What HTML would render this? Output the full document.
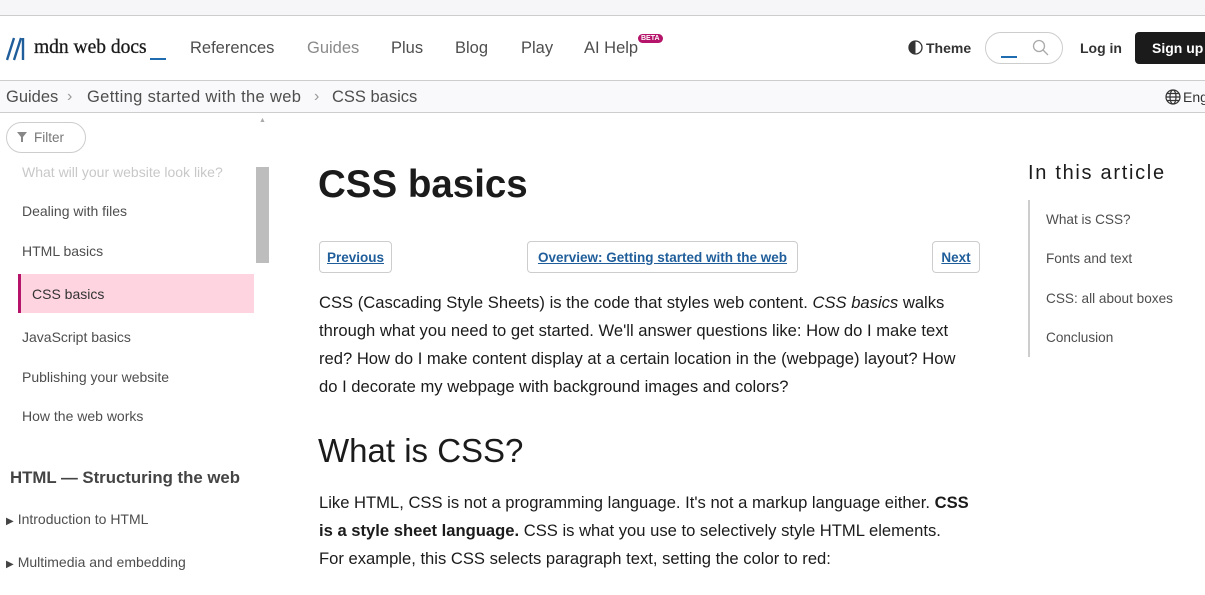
<!DOCTYPE html>
<html><head><meta charset="utf-8"><style>
*{margin:0;padding:0;box-sizing:border-box}
body{width:1205px;height:595px;overflow:hidden;background:#fff;font-family:"Liberation Sans",sans-serif;color:#1b1b1b;position:relative}
.a{position:absolute;white-space:nowrap}
.nav{font-size:16px;color:#4e4e4e}
.side{font-size:14px;color:#4e4e4e}
.toc{font-size:13.6px;color:#4e4e4e}
.p{font-size:16.6px;line-height:28px;color:#1b1b1b;width:652px;white-space:normal}
.btn{border:1px solid #cdcdcd;border-radius:4px;height:32px;font-size:13.5px;font-weight:bold;color:#1f5e9a;text-decoration:underline;display:flex;align-items:center;justify-content:center}
.tri{font-size:10px;color:#444;margin-right:4px}
</style></head><body>
<div class="a" style="left:0;top:0;width:1205px;height:16px;background:#f6f6f8;border-bottom:1px solid #cdcdcd"></div>
<svg class="a" style="left:6px;top:37px" width="26" height="24" viewBox="0 0 26 24"><path d="M1 23L8 1M8 23L15 1M17 1V23" stroke="#1f5e9a" stroke-width="2.4" fill="none"/></svg>
<div class="a" style="left:34px;top:37px;font-family:'Liberation Serif',serif;font-size:19.5px;color:#1b1b1b;-webkit-text-stroke:0.3px #1b1b1b">mdn web docs</div>
<div class="a" style="left:150px;top:58px;width:16px;height:2px;background:#1f6db0"></div>
<div class="a nav" style="left:190px;top:39px;font-size:16.5px">References</div>
<div class="a nav" style="left:307px;top:39px;color:#8a8a8a;font-size:16.5px">Guides</div>
<div class="a nav" style="left:391px;top:39px;font-size:16.5px">Plus</div>
<div class="a nav" style="left:455px;top:39px;font-size:16.5px">Blog</div>
<div class="a nav" style="left:521px;top:39px;font-size:16.5px">Play</div>
<div class="a nav" style="left:584px;top:39px;font-size:16.5px">AI Help</div>
<div class="a" style="left:638px;top:34px;background:#b5146a;color:#fff;font-size:7px;font-weight:bold;border-radius:6px;padding:1px 3px">BETA</div>
<svg class="a" style="left:908px;top:40px" width="15" height="15"><circle cx="7.5" cy="7.5" r="6.5" fill="none" stroke="#333" stroke-width="1.3"/><path d="M7.5 1a6.5 6.5 0 0 0 0 13z" fill="#333"/></svg>
<div class="a" style="left:926px;top:40px;font-size:14px;font-weight:bold;color:#333">Theme</div>
<div class="a" style="left:985px;top:32px;width:78px;height:32px;border:1px solid #cdcdcd;border-radius:16px"></div>
<div class="a" style="left:1001px;top:56px;width:16px;height:2px;background:#1f6db0"></div>
<svg class="a" style="left:1032px;top:39px" width="17" height="17"><circle cx="7" cy="7" r="5.5" fill="none" stroke="#aaa" stroke-width="1.3"/><path d="M11 11L16 16" stroke="#aaa" stroke-width="1.3"/></svg>
<div class="a" style="left:1080px;top:40px;font-size:14px;font-weight:bold;color:#333">Log in</div>
<div class="a" style="left:1135px;top:32px;width:80px;height:32px;background:#1b1b1b;border-radius:4px;color:#fff;font-size:14px;font-weight:bold;padding:8px 0 0 17px">Sign up</div>
<div class="a" style="left:0;top:80px;width:1205px;height:33px;background:#f9f9fb;border-top:1px solid #cdcdcd;border-bottom:1px solid #cdcdcd"></div>
<div class="a nav" style="left:6px;top:88px;font-size:16.5px">Guides</div>
<div class="a nav" style="left:67px;top:88px;color:#999">›</div>
<div class="a nav" style="left:87px;top:88px;font-size:16.5px;letter-spacing:0.35px">Getting started with the web</div>
<div class="a nav" style="left:314px;top:88px;color:#999">›</div>
<div class="a nav" style="left:332px;top:88px;font-size:16.5px">CSS basics</div>
<svg class="a" style="left:1165px;top:89px" width="16" height="16" viewBox="0 0 16 16" fill="none" stroke="#333" stroke-width="1.2"><circle cx="8" cy="8" r="7"/><ellipse cx="8" cy="8" rx="3" ry="7"/><path d="M1 8H15M2 4.5H14M2 11.5H14"/></svg>
<div class="a" style="left:1183px;top:89px;font-size:14px;color:#333">Eng</div>
<div class="a" style="left:259px;top:117px;font-size:7px;color:#aaa">▲</div>
<div class="a" style="left:6px;top:122px;width:80px;height:31px;border:1px solid #cdcdcd;border-radius:16px"></div>
<svg class="a" style="left:17px;top:132px" width="10" height="10"><path d="M0 0H10L6 5V10H4V5Z" fill="#888"/></svg>
<div class="a" style="left:34px;top:130px;font-size:13.5px;color:#777">Filter</div>
<div class="a side" style="left:22px;top:164px;color:#c8c8c8">What will your website look like?</div>
<div class="a" style="left:256px;top:167px;width:13px;height:96px;background:#bdbdbd"></div>
<div class="a side" style="left:22px;top:203px">Dealing with files</div>
<div class="a side" style="left:22px;top:243px">HTML basics</div>
<div class="a" style="left:18px;top:274px;width:236px;height:39px;background:#fdd4e0;border-left:3px solid #b5146a"></div>
<div class="a side" style="left:32px;top:286px;color:#333">CSS basics</div>
<div class="a side" style="left:22px;top:329px">JavaScript basics</div>
<div class="a side" style="left:22px;top:369px">Publishing your website</div>
<div class="a side" style="left:22px;top:408px">How the web works</div>
<div class="a" style="left:10px;top:468px;font-size:16.8px;font-weight:bold;color:#444">HTML — Structuring the web</div>
<div class="a side" style="left:6px;top:511px"><span class="tri">▶</span>Introduction to HTML</div>
<div class="a side" style="left:6px;top:554px"><span class="tri">▶</span>Multimedia and embedding</div>
<div class="a" style="left:318px;top:163px;font-size:38.5px;font-weight:bold;color:#1b1b1b">CSS basics</div>
<div class="a btn" style="left:319px;top:241px;width:73px">Previous</div>
<div class="a btn" style="left:527px;top:241px;width:271px">Overview: Getting started with the web</div>
<div class="a btn" style="left:932px;top:241px;width:48px">Next</div>
<div class="a p" style="left:319px;top:289px">CSS (Cascading Style Sheets) is the code that styles web content. <i>CSS basics</i> walks through what you need to get started. We'll answer questions like: How do I make text red? How do I make content display at a certain location in the (webpage) layout? How do I decorate my webpage with background images and colors?</div>
<div class="a" style="left:318px;top:432px;font-size:33px;color:#1b1b1b">What is CSS?</div>
<div class="a p" style="left:319px;top:489px">Like HTML, CSS is not a programming language. It's not a markup language either. <b>CSS is a style sheet language.</b> CSS is what you use to selectively style HTML elements. For&nbsp;example, this CSS selects paragraph text, setting the color to red:</div>
<div class="a" style="left:1028px;top:162px;font-size:20px;letter-spacing:1.7px;color:#1b1b1b">In this article</div>
<div class="a" style="left:1028px;top:200px;width:2px;height:157px;background:#cdcdcd"></div>
<div class="a toc" style="left:1046px;top:212px">What is CSS?</div>
<div class="a toc" style="left:1046px;top:251px">Fonts and text</div>
<div class="a toc" style="left:1046px;top:291px">CSS: all about boxes</div>
<div class="a toc" style="left:1046px;top:330px">Conclusion</div>
</body></html>
